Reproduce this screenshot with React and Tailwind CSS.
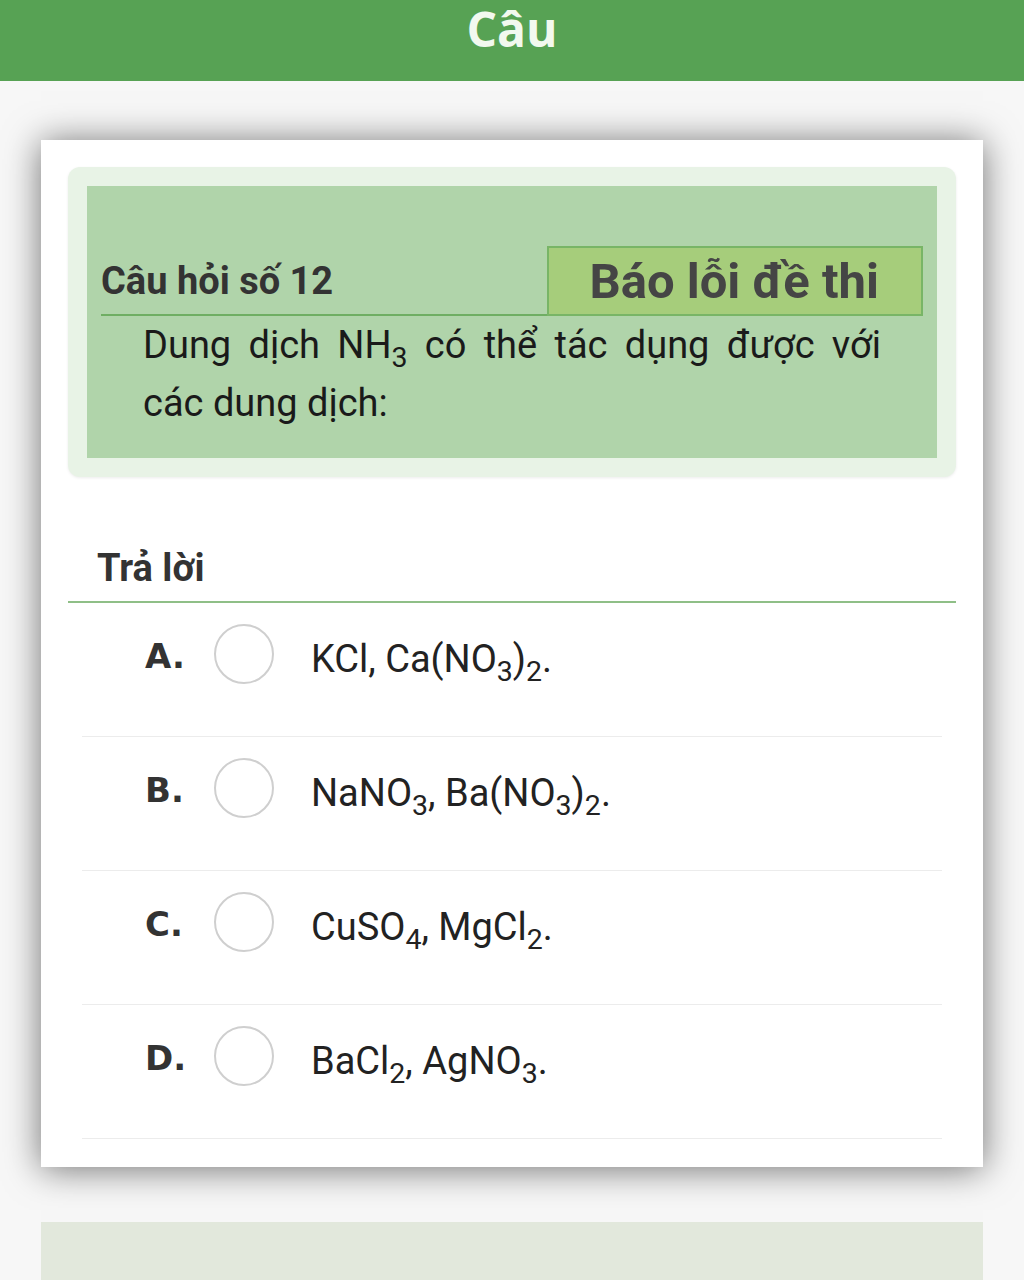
import React from "react";

function Sub({ children }) {
  return <span className="text-[0.75em] align-[-0.3em] leading-none">{children}</span>;
}

const options = [
  { l: "A.", t: <>KCl, Ca(NO<Sub>3</Sub>)<Sub>2</Sub>.</> },
  { l: "B.", t: <>NaNO<Sub>3</Sub>, Ba(NO<Sub>3</Sub>)<Sub>2</Sub>.</> },
  { l: "C.", t: <>CuSO<Sub>4</Sub>, MgCl<Sub>2</Sub>.</> },
  { l: "D.", t: <>BaCl<Sub>2</Sub>, AgNO<Sub>3</Sub>.</> },
];

export default function App() {
  return (
    <div className="min-h-[1280px] bg-[#f7f7f7] overflow-hidden" style={{ fontFamily: "Roboto, 'Noto Sans', sans-serif" }}>
      <div className="h-[81px] bg-[#57a254] flex justify-center">
        <div className="text-[48px] font-bold text-[#f2f9ef] leading-none pt-[5px]" style={{ fontFamily: "'Open Sans', sans-serif" }}>Câu</div>
      </div>
      <div className="pt-[59px] px-[41px]">
        <div className="bg-white shadow-[0_2px_34px_rgba(0,0,0,0.55)] px-[27px] pt-[27px] pb-[28px]">
          <div className="bg-[#e8f3e6] rounded-[12px] p-[19px] shadow-[0_1px_3px_rgba(0,0,0,0.08)]">
            <div className="bg-[#b0d4aa] h-[272px] pt-[60px] px-[14px]">
              <div className="flex items-end">
                <div className="flex-1 border-b-2 border-[#6fae63] h-[70px] flex items-center text-[38px] font-bold text-[#333] leading-none pt-[2px]">
                  Câu hỏi số 12
                </div>
                <div className="w-[376px] h-[70px] bg-[#a6cd7b] border-2 border-[#78b566] flex items-center justify-end pr-[42px] text-[49px] font-bold text-[#454545] leading-none">
                  Báo lỗi đề thi
                </div>
              </div>
              <div className="px-[42px] text-[38px] text-[#1a1a1a] leading-[58px] text-justify">
                Dung dịch NH<Sub>3</Sub> có thể tác dụng được với các dung dịch:
              </div>
            </div>
          </div>
          <div className="pt-[72px] pl-[29px] text-[38px] font-bold text-[#333] leading-none h-[126px] border-b-2 border-[#8fbf87]">
            Trả lời
          </div>
          <div className="px-[14px]">
            {options.map((o) => (
              <div key={o.l} className="border-b border-[#ececec] pt-[20px] pb-[52px] flex items-center h-[134px]">
                <div className="w-[69px] ml-[63px] text-[34px] font-bold text-[#333] leading-none pt-[4px]" style={{ fontFamily: "'DejaVu Sans', sans-serif" }}>{o.l}</div>
                <div className="w-[60px] h-[60px] rounded-full border-2 border-[#cfcfcf] shrink-0" />
                <div className="ml-[37px] text-[38px] text-[#222] leading-none pt-[20px]">{o.t}</div>
              </div>
            ))}
          </div>
        </div>
        <div className="mt-[55px] h-[80px] bg-[#e2e8dc]" />
      </div>
    </div>
  );
}
